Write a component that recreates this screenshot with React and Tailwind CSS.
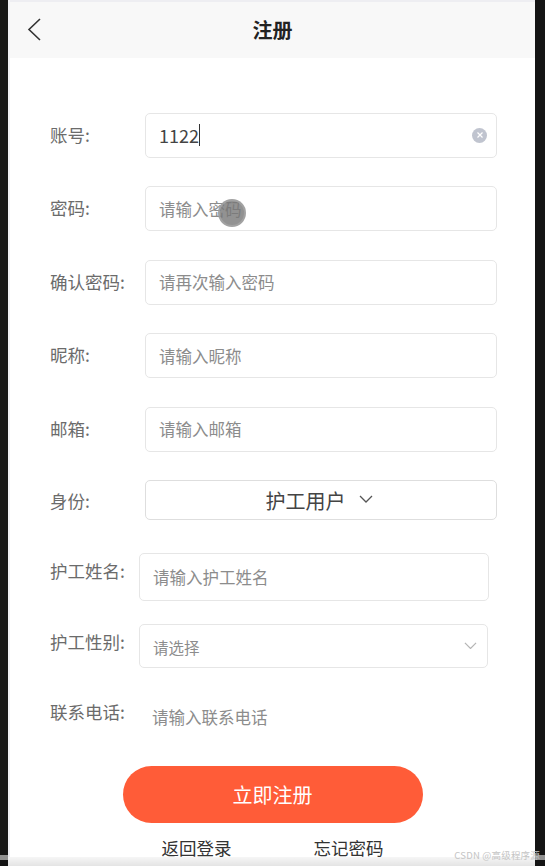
import React from "react";

function Label({ children }) {
  return <span className="text-[17.5px] leading-[24px] text-[#6b6b6b] whitespace-nowrap">{children}</span>;
}

function Field({ label, placeholder, value }) {
  return (
    <div className="flex items-center h-[46px] mb-[27.5px]">
      <div className="w-[95px] shrink-0 pb-[1px]"><Label>{label}</Label></div>
      <div className="w-[352px] h-[45px] border border-[#e6e6e6] rounded-[5px] bg-white flex items-center pl-[13px] pr-[9px]">
        {value ? (
          <>
            <span className="text-[18px] text-[#444] leading-[24px]">{value}</span>
            <span className="w-px h-[22px] bg-[#333]" />
            <span className="ml-auto w-[15px] h-[15px] rounded-full bg-[#c0c4cf] flex items-center justify-center">
              <svg width="8" height="8" viewBox="0 0 8 8"><path d="M1.5 1.5l5 5M6.5 1.5l-5 5" stroke="#fff" strokeWidth="1.2" /></svg>
            </span>
          </>
        ) : (
          <span className="text-[16.5px] text-[#8c8c8c] leading-[24px]">{placeholder}</span>
        )}
      </div>
    </div>
  );
}

function Chevron({ w = 14, color = "#666" }) {
  return (
    <svg width={w} height={w * 0.6} viewBox="0 0 14 8.4" fill="none"><path d="M1 1l6 6 6-6" stroke={color} strokeWidth="1.3" /></svg>
  );
}

export default function App() {
  return (
    <div className="relative w-[545px] h-[866px] overflow-hidden bg-[#141414] font-['Noto_Sans_CJK_SC','Noto_Sans',sans-serif]">
      <div className="relative ml-[8px] w-[527px] h-[866px] bg-white border-t-2 border-l-2 border-[#eeeef2]">
        <header className="relative h-[56px] bg-[#f8f8f8] flex items-center justify-center">
          <svg className="absolute left-[16px] top-[15px]" width="16" height="24" viewBox="0 0 16 24" fill="none"><path d="M14 2L3 12.5 14 23" stroke="#333" strokeWidth="1.6" /></svg>
          <span className="text-[20px] font-bold text-[#222] leading-[28px]">注册</span>
        </header>

        <div className="pl-[40px] pt-[54px]">
          <Field label="账号:" value="1122" />
          <Field label="密码:" placeholder="请输入密码" />
          <Field label="确认密码:" placeholder="请再次输入密码" />
          <Field label="昵称:" placeholder="请输入昵称" />
          <Field label="邮箱:" placeholder="请输入邮箱" />

          <div className="flex items-center h-[40px] mb-[33px]">
            <div className="w-[95px] shrink-0 pt-[3px]"><Label>身份:</Label></div>
            <div className="w-[352px] h-[40px] border border-[#dedede] rounded-[5px] flex items-center justify-center gap-[13px] pr-[4px]">
              <span className="text-[20px] text-[#444] leading-[24px] pt-[2px]">护工用户</span>
              <Chevron w={14} color="#555" />
            </div>
          </div>

          <div className="flex items-start mb-[23px]">
            <div className="w-[89px] shrink-0 pt-[6px]"><Label>护工姓名:</Label></div>
            <div className="w-[350px] h-[48px] border border-[#e6e6e6] rounded-[5px] flex items-center pl-[13px]">
              <span className="text-[16.5px] text-[#8c8c8c] leading-[24px]">请输入护工姓名</span>
            </div>
          </div>

          <div className="flex items-start mb-[27px]">
            <div className="w-[89px] shrink-0 pt-[6px]"><Label>护工性别:</Label></div>
            <div className="w-[349px] h-[44px] border border-[#e6e6e6] rounded-[5px] flex items-center justify-between pl-[13px] pr-[10px]">
              <span className="text-[15.5px] text-[#8c8c8c] leading-[24px] pt-[3px]">请选择</span>
              <Chevron w={13} color="#b5b5b5" />
            </div>
          </div>

          <div className="flex items-start h-[44px]">
            <div className="w-[89px] shrink-0 pt-[5px]"><Label>联系电话:</Label></div>
            <div className="pl-[13px] pt-[10px]">
              <span className="text-[16.5px] text-[#8c8c8c] leading-[24px]">请输入联系电话</span>
            </div>
          </div>
        </div>

        <div className="flex justify-center mt-[27px]">
          <button className="w-[300px] h-[57px] rounded-full bg-[#ff5c38] text-white text-[20px] leading-[28px] pt-[1px]">立即注册</button>
        </div>
        <div className="flex justify-center gap-[82px] mt-[12px]">
          <span className="text-[17.5px] text-[#333] leading-[26px]">返回登录</span>
          <span className="text-[17.5px] text-[#333] leading-[26px]">忘记密码</span>
        </div>
      </div>

      <div className="absolute left-[218px] top-[199px] w-[28px] h-[28px] rounded-full bg-[#777]/80 border-2 border-[#aaa]/70 blur-[0.5px]" />
      <div className="absolute left-[8px] w-[527px] bottom-0 h-[9px] bg-gradient-to-b from-[#f6f6f6] to-[#e4e4e4]" />
      <div className="absolute left-0 bottom-[6px] w-[8px] h-[5px] bg-[#8f8f8f]" />
      <div className="absolute right-0 bottom-[6px] w-[10px] h-[5px] bg-[#8f8f8f]" />
      <div className="absolute right-[5px] bottom-[3px] text-[9.5px] leading-[16px] tracking-[0.2px] text-[#c4c4c4]">CSDN @高级程序源</div>
    </div>
  );
}
